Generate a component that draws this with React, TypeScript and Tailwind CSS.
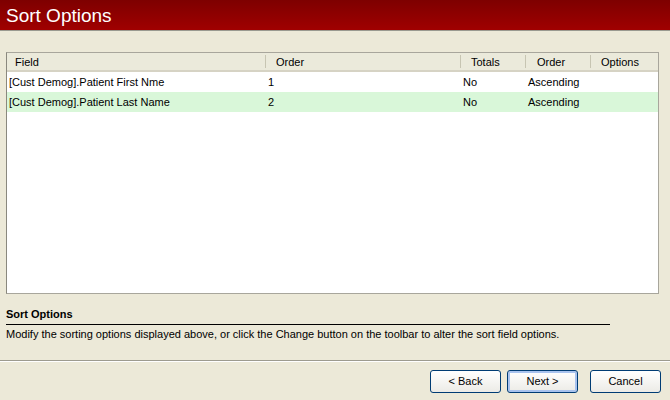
const columns = [
  { label: 'Field', w: 'w-[258px]', pad: 'pl-[8px]' },
  { label: 'Order', w: 'w-[195px]', pad: 'pl-[10px]' },
  { label: 'Totals', w: 'w-[65px]', pad: 'pl-[10px]' },
  { label: 'Order', w: 'w-[65px]', pad: 'pl-[11px]' },
  { label: 'Options', w: 'flex-1', pad: 'pl-[10px]' },
];

const rows = [
  { field: '[Cust Demog].Patient First Nme', order: '1', totals: 'No', dir: 'Ascending', bg: 'bg-white' },
  { field: '[Cust Demog].Patient Last Name', order: '2', totals: 'No', dir: 'Ascending', bg: 'bg-[#d9f7d9]' },
];

function XpButton({ label, focused }: { label: string; focused?: boolean }) {
  return (
    <button
      className={`h-[23px] w-[71px] rounded-[3px] border border-[#003c74] bg-gradient-to-b from-white to-[#ecebe6] text-[11px] text-black ${
        focused ? 'shadow-[inset_0_0_0_2px_#a9c3ee]' : ''
      }`}
    >
      {label}
    </button>
  );
}

export default function App() {
  return (
    <div
      className="w-[670px] h-[400px] flex flex-col bg-[#ece9d8] text-[11px] text-black overflow-hidden"
      style={{ fontFamily: '"Liberation Sans", Arial, sans-serif' }}
    >
      <div className="h-[31px] shrink-0 flex items-center px-[6px] bg-gradient-to-b from-[#7e0000] to-[#a00000] border-b border-[#9a9a90]">
        <span className="text-white text-[19px] leading-none">Sort Options</span>
      </div>

      <div className="mt-[21px] mx-[6px] h-[242px] w-[653px] flex flex-col bg-white border border-[#a8a69c] border-l-[#8a887e] shrink-0">
        <div className="h-[19px] flex bg-[#ebeadb] border-b-2 border-[#d6d3c4]">
          {columns.map((c, i) => (
            <div
              key={i}
              className={`${c.w} ${c.pad} flex items-center pt-[1px] ${i > 0 ? 'border-l border-[#c7c5b2]' : ''} my-[2px]`}
            >
              {c.label}
            </div>
          ))}
        </div>
        {rows.map((r, i) => (
          <div key={i} className={`h-[20px] flex items-center ${r.bg}`}>
            <div className="w-[258px] pl-[2px]">{r.field}</div>
            <div className="w-[196px] pl-[3px]">{r.order}</div>
            <div className="w-[65px] pl-[2px]">{r.totals}</div>
            <div className="w-[65px] pl-[2px]">{r.dir}</div>
            <div className="flex-1" />
          </div>
        ))}
      </div>

      <div className="mt-[12px] px-[6px]">
        <div className="w-[604px] border-b border-black pb-[1px] font-bold">Sort Options</div>
        <div className="mt-[1px]">
          Modify the sorting options displayed above, or click the Change button on the toolbar to alter the sort field options.
        </div>
      </div>

      <div className="mt-[18px] border-t border-[#9d9b8f] shadow-[0_1px_0_white]" />

      <div className="flex justify-end pr-[9px] pt-[9px]">
        <XpButton label="< Back" />
        <div className="w-[6px]" />
        <XpButton label="Next >" focused />
        <div className="w-[12px]" />
        <XpButton label="Cancel" />
      </div>
    </div>
  );
}
